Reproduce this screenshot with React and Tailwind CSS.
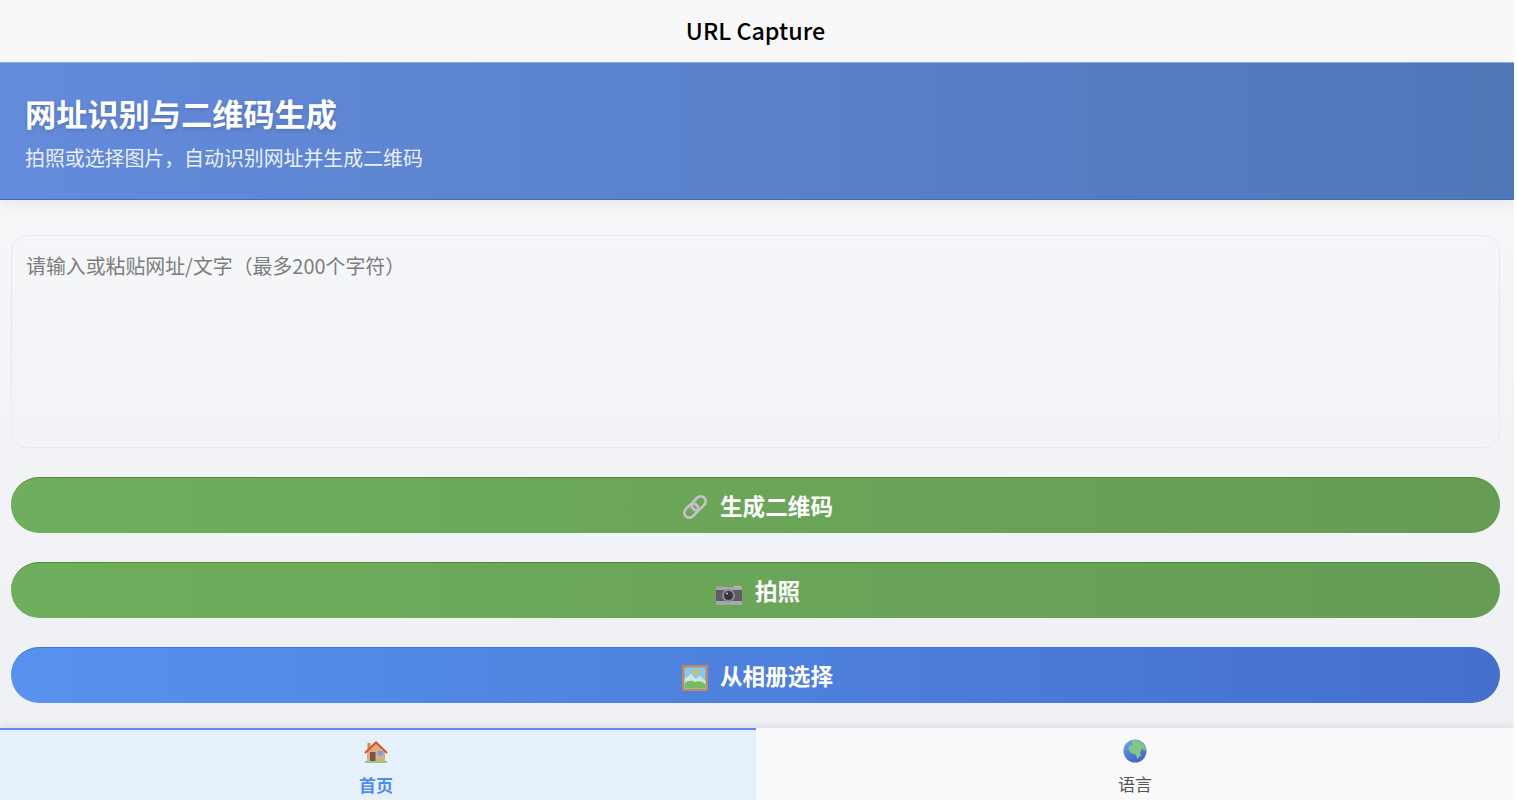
import React from 'react';

const LinkIcon = () => (
  <svg width="26" height="26" viewBox="0 0 26 26" fill="none" className="translate-y-[1px] overflow-visible">
    <g transform="rotate(-45 13 13)" stroke="#c6bfce" strokeWidth="2.8">
      <rect x="0" y="8" width="15.5" height="10" rx="5" />
      <rect x="10.5" y="8" width="15.5" height="10" rx="5" />
    </g>
  </svg>
);

const CameraIcon = () => (
  <svg width="28" height="26" viewBox="0 0 28 26" className="translate-y-[3px]">
    <rect x="2" y="5" width="6" height="2" fill="#9a98a0" />
    <rect x="19" y="5" width="7" height="2" fill="#b9b7bd" />
    <rect x="1" y="6" width="26" height="18" rx="1.5" fill="#5f5c66" />
    <rect x="1" y="6" width="26" height="3" fill="#a9a7ae" />
    <rect x="1" y="20" width="26" height="4" fill="#a9a7ae" />
    <circle cx="13.5" cy="14.5" r="6.5" fill="#8d8b93" />
    <circle cx="13.5" cy="14.5" r="4.5" fill="#37343f" />
    <circle cx="12" cy="12.5" r="1" fill="#cfcdd3" />
  </svg>
);

const PictureIcon = () => (
  <svg width="26" height="26" viewBox="0 0 26 26" className="translate-y-[2px]">
    <rect width="26" height="26" fill="#bd8a60" />
    <rect x="2.5" y="2.5" width="21" height="21" fill="#86c9ee" />
    <circle cx="13.5" cy="7" r="2.6" fill="#f2b72a" />
    <path d="M2.5 14 L9 9 L14 14 L18 11 L23.5 16 V23.5 H2.5 Z" fill="#cfe6dc" />
    <path d="M2.5 23.5 V18 Q8 14 13 17 Q19 15 23.5 19 V23.5 Z" fill="#74bd62" />
  </svg>
);

const HouseIcon = () => (
  <svg width="24" height="24" viewBox="0 0 24 24">
    <rect x="3.5" y="2" width="3" height="9" fill="#c98d4a" />
    <path d="M3 11 L12 2.5 L21 11 V20 H3 Z" fill="#dcae7e" />
    <rect x="6" y="11" width="5.5" height="9" fill="#7a5548" />
    <rect x="14" y="10" width="5" height="4.5" fill="#64a8ee" />
    <path d="M1 12 L12 1.5 L23 12" fill="none" stroke="#d9502c" strokeWidth="2" />
    <rect x="1" y="20" width="22" height="2" fill="#8ccb84" />
  </svg>
);

const GlobeIcon = () => (
  <svg width="24" height="24" viewBox="0 0 24 24">
    <defs>
      <linearGradient id="sea" x1="0.2" y1="0" x2="0.6" y2="1">
        <stop offset="0" stopColor="#6aa6e8" />
        <stop offset="1" stopColor="#3f62c4" />
      </linearGradient>
    </defs>
    <circle cx="12" cy="12" r="11.5" fill="url(#sea)" />
    <path d="M9 1 Q17 0 22 7 Q23.5 10 22.5 12 L19 9.5 L17 13 L18 16 L14.5 20 L12.5 15.5 L8 14 L5 10 L6 7 L9.5 6 Z" fill="#84c684" />
  </svg>
);

const ActionButton = ({ icon, label, className }) => (
  <button
    type="button"
    className={`flex h-[56px] w-full items-center justify-center gap-3 rounded-full pl-[4px] text-[22.6px] font-semibold text-white ${className}`}
  >
    {icon}
    <span className="leading-[30px]">{label}</span>
  </button>
);

const green = 'bg-gradient-to-r from-[#6fae5c] to-[#669c54] border-t border-[#4d8b3a]';

export default function App() {
  return (
    <div
      className="w-[1514px] h-[800px] flex flex-col overflow-hidden bg-gradient-to-b from-[#f8f9fb] to-[#eeeff2]"
      style={{ fontFamily: '"Noto Sans CJK SC", "Noto Sans", sans-serif' }}
    >
      <header className="flex h-[62px] shrink-0 items-center justify-center bg-[#f8f8f8] pr-[3px] pb-[1px] text-[23.3px] font-medium text-black">
        URL Capture
      </header>

      <section className="flex h-[138px] shrink-0 flex-col bg-gradient-to-r from-[#648bdc] to-[#5077b8] px-[25px] pt-[27px] border-t border-b border-t-[#8fa9e2] border-b-[#3a6fc0] shadow-[0_4px_12px_rgba(0,0,0,0.06)]">
        <h1 className="text-[31.2px] leading-[46px] font-bold text-white [text-shadow:0_2px_4px_rgba(0,0,0,0.15)]">
          网址识别与二维码生成
        </h1>
        <p className="text-[19.9px] leading-[30px] text-[#eaf0fb] mt-[7px]">拍照或选择图片，自动识别网址并生成二维码</p>
      </section>

      <main className="flex flex-1 flex-col pl-[11px] pr-[14px] pt-[35px] min-h-0">
        <textarea
          readOnly
          placeholder="请输入或粘贴网址/文字（最多200个字符）"
          className="h-[213px] w-full resize-none rounded-2xl border border-[#e8e9ec] bg-transparent px-[14px] py-[15px] text-[19.9px] leading-[30px] placeholder:text-[#7d7d7d] outline-none"
        />
        <div className="mt-[29px] flex flex-col gap-[29px]">
          <ActionButton icon={<LinkIcon />} label="生成二维码" className={green} />
          <ActionButton icon={<CameraIcon />} label="拍照" className={green} />
          <ActionButton
            icon={<PictureIcon />}
            label="从相册选择"
            className="bg-gradient-to-r from-[#5792ee] to-[#456fcd] border-t border-[#3c73d8]"
          />
        </div>
      </main>

      <nav className="flex h-[72px] shrink-0 bg-[#f8f9fb] shadow-[0_-2px_8px_rgba(0,0,0,0.08)]">
        <div className="flex w-[756px] flex-col items-center border-t-2 border-[#5b8def] bg-[#e6f0fb] pr-[4px] pt-[11px]">
          <HouseIcon />
          <span className="mt-[7px] text-[17px] leading-[25px] font-semibold text-[#4f8cf0]">首页</span>
        </div>
        <div className="flex flex-1 flex-col items-center pt-[11px]">
          <GlobeIcon />
          <span className="mt-[8px] text-[17px] leading-[25px] text-[#555555]">语言</span>
        </div>
      </nav>
    </div>
  );
}
